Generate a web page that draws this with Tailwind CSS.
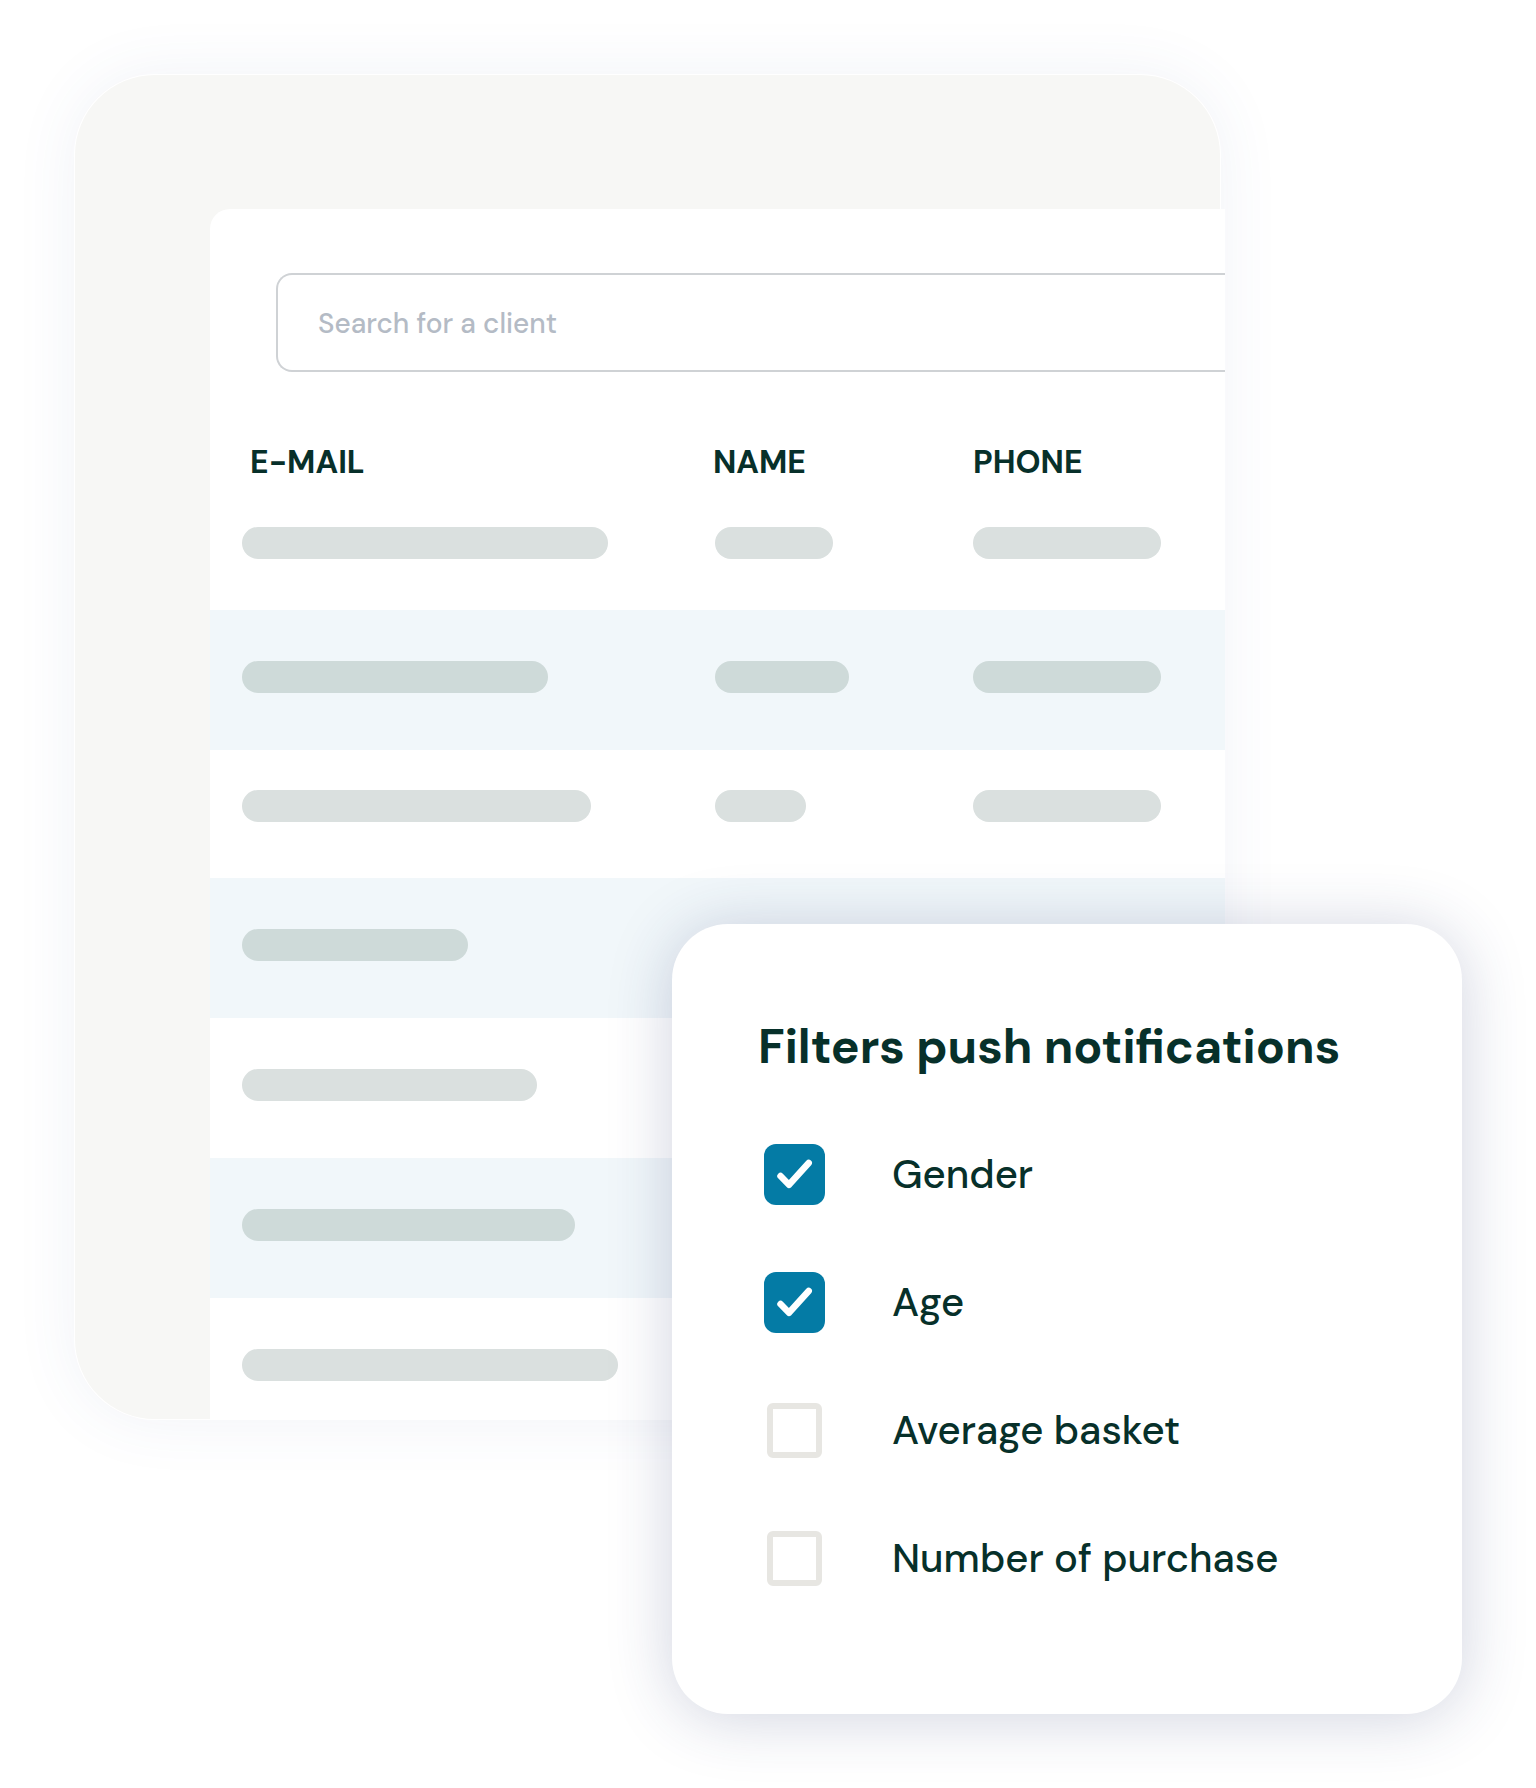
<!DOCTYPE html>
<html lang="en">
<head>
  <meta charset="UTF-8">
  <meta name="viewport" content="width=device-width, initial-scale=1.0">
  <title>Clients</title>
  <script src="https://cdn.jsdelivr.net/npm/@tailwindcss/browser@4"></script>
</head>
<body class="bg-white text-[#07302a] font-['DM_Sans','Lato',sans-serif] min-h-screen">

  <main class="pt-[75px] pb-[74px] pl-[75px] pr-[74px]">

    <!-- Client list -->
    <section class="w-full max-w-[1145px] bg-[#f7f7f5] rounded-[80px] rounded-r-none rounded-tr-[80px] pt-[134px] pl-[135px] ring-1 ring-white shadow-[0_0_64px_rgba(60,90,150,0.08)]">
      <div class="bg-white rounded-tl-[20px] -mr-[5px] pt-16 pb-[38px]">
        <div class="pl-[66px]">
          <input type="text" aria-label="Search for a client" placeholder="Search for a client"
            class="block w-full h-[99px] pt-[2px] pl-10 border-2 border-r-0 border-[#cfd2d5] rounded-l-2xl text-[28px] font-medium placeholder:text-[#b4bbc5] focus:outline-none">
        </div>

        <table class="w-full table-fixed border-collapse text-left">
          <thead class="align-bottom">
            <tr class="h-[111px] text-[32px] leading-[36px]">
              <th class="w-[503px] pl-10 pb-[3px] font-bold">E-MAIL</th>
              <th class="w-[260px] pb-[3px] font-bold">NAME</th>
              <th class="pb-[3px] font-bold">PHONE</th>
            </tr>
          </thead>
          <tbody class="align-top">
            <tr class="h-[127px]">
              <td class="pl-8 pt-[44px]"><div class="h-8 w-[366px] rounded-full bg-[#dae0df]"></div></td>
              <td class="pt-[44px] pl-[2px]"><div class="h-8 w-[118px] rounded-full bg-[#dae0df]"></div></td>
              <td class="pt-[44px]"><div class="h-8 w-[188px] rounded-full bg-[#dae0df]"></div></td>
            </tr>
            <tr class="h-[140px] bg-[#f1f7fa]">
              <td class="pl-8 pt-[51px]"><div class="h-8 w-[306px] rounded-full bg-[#cedad9]"></div></td>
              <td class="pt-[51px] pl-[2px]"><div class="h-8 w-[134px] rounded-full bg-[#cedad9]"></div></td>
              <td class="pt-[51px]"><div class="h-8 w-[188px] rounded-full bg-[#cedad9]"></div></td>
            </tr>
            <tr class="h-[128px]">
              <td class="pl-8 pt-[40px]"><div class="h-8 w-[349px] rounded-full bg-[#dae0df]"></div></td>
              <td class="pt-[40px] pl-[2px]"><div class="h-8 w-[91px] rounded-full bg-[#dae0df]"></div></td>
              <td class="pt-[40px]"><div class="h-8 w-[188px] rounded-full bg-[#dae0df]"></div></td>
            </tr>
            <tr class="h-[140px] bg-[#f1f7fa]">
              <td class="pl-8 pt-[51px]"><div class="h-8 w-[226px] rounded-full bg-[#cedad9]"></div></td>
              <td></td>
              <td></td>
            </tr>
            <tr class="h-[140px]">
              <td class="pl-8 pt-[51px]"><div class="h-8 w-[295px] rounded-full bg-[#dae0df]"></div></td>
              <td></td>
              <td></td>
            </tr>
            <tr class="h-[140px] bg-[#f1f7fa]">
              <td class="pl-8 pt-[51px]"><div class="h-8 w-[333px] rounded-full bg-[#cedad9]"></div></td>
              <td></td>
              <td></td>
            </tr>
            <tr>
              <td class="pl-8 pt-[51px]"><div class="h-8 w-[376px] rounded-full bg-[#dae0df]"></div></td>
              <td></td>
              <td></td>
            </tr>
          </tbody>
        </table>
      </div>
    </section>

    <!-- Filters card, laid over the bottom right of the list -->
    <form class="relative ml-auto -mt-[495px] w-full max-w-[790px] bg-white rounded-[56px] pt-[93px] pb-[125px] pl-[86px] pr-12 shadow-[0_4px_64px_rgba(40,55,110,0.22)]">
      <h2 class="text-[48px] leading-[60px] font-bold">Filters push notifications</h2>

      <div class="mt-[67px] pl-[6px] flex flex-col gap-[67px] text-[40px] leading-[61px] font-medium">
        <label class="flex items-center gap-[67px]">
          <span class="relative grid size-[61px] place-items-center">
            <input type="checkbox" checked class="peer appearance-none size-[55px] rounded-md border-[6px] border-[#e7e6e2] checked:size-[61px] checked:rounded-xl checked:border-0 checked:bg-[#047ba5]">
            <svg class="absolute inset-0 hidden peer-checked:block" viewBox="0 0 61 61" fill="none" stroke="#fff" stroke-width="6.500" stroke-linecap="round" stroke-linejoin="round"><path d="M16.500 32 25 40.800 44.700 19"/></svg>
          </span>
          Gender
        </label>
        <label class="flex items-center gap-[67px]">
          <span class="relative grid size-[61px] place-items-center">
            <input type="checkbox" checked class="peer appearance-none size-[55px] rounded-md border-[6px] border-[#e7e6e2] checked:size-[61px] checked:rounded-xl checked:border-0 checked:bg-[#047ba5]">
            <svg class="absolute inset-0 hidden peer-checked:block" viewBox="0 0 61 61" fill="none" stroke="#fff" stroke-width="6.500" stroke-linecap="round" stroke-linejoin="round"><path d="M16.500 32 25 40.800 44.700 19"/></svg>
          </span>
          Age
        </label>
        <label class="flex items-center gap-[67px]">
          <span class="relative grid size-[61px] place-items-center">
            <input type="checkbox" class="peer appearance-none size-[55px] rounded-md border-[6px] border-[#e7e6e2] checked:size-[61px] checked:rounded-xl checked:border-0 checked:bg-[#047ba5]">
            <svg class="absolute inset-0 hidden peer-checked:block" viewBox="0 0 61 61" fill="none" stroke="#fff" stroke-width="6.500" stroke-linecap="round" stroke-linejoin="round"><path d="M16.500 32 25 40.800 44.700 19"/></svg>
          </span>
          Average basket
        </label>
        <label class="flex items-center gap-[67px]">
          <span class="relative grid size-[61px] place-items-center">
            <input type="checkbox" class="peer appearance-none size-[55px] rounded-md border-[6px] border-[#e7e6e2] checked:size-[61px] checked:rounded-xl checked:border-0 checked:bg-[#047ba5]">
            <svg class="absolute inset-0 hidden peer-checked:block" viewBox="0 0 61 61" fill="none" stroke="#fff" stroke-width="6.500" stroke-linecap="round" stroke-linejoin="round"><path d="M16.500 32 25 40.800 44.700 19"/></svg>
          </span>
          Number of purchase
        </label>
      </div>
    </form>

  </main>

</body>
</html>
